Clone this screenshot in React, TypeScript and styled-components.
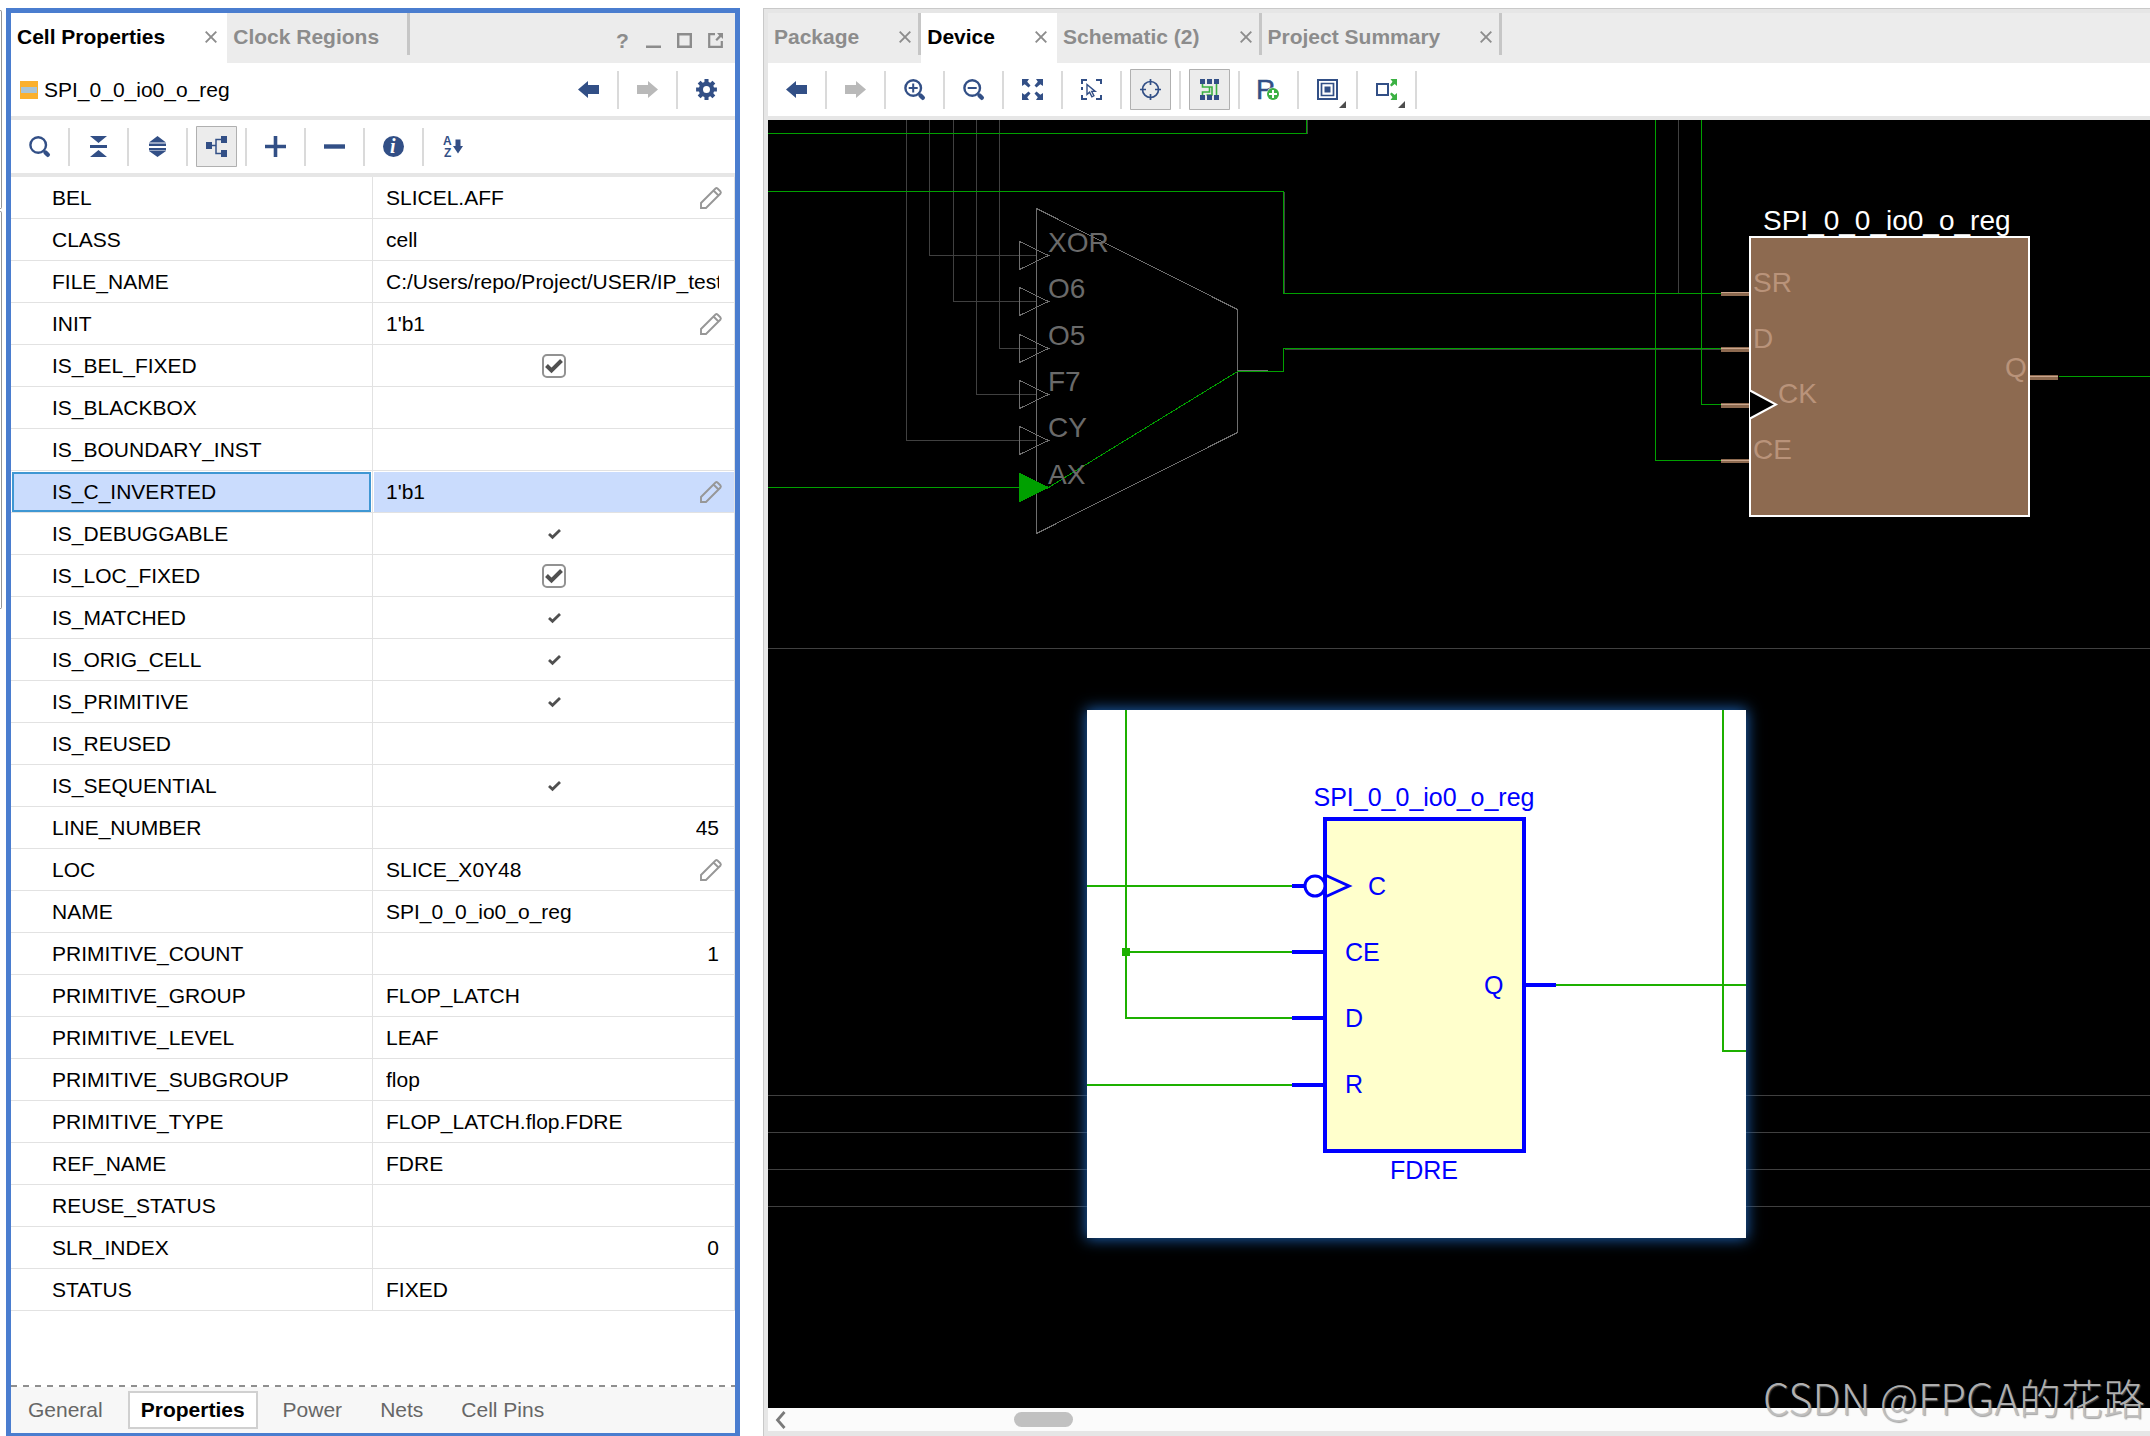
import React, { useState } from 'react';
import styled, { createGlobalStyle, css } from 'styled-components';

const navy = '#324f86';
const leaf = '#3bb143';
const rule = '#e6e6e6';
const sans = '"Liberation Sans", Arial, sans-serif';

const GlobalStyle = createGlobalStyle`
  *, *::before, *::after { box-sizing: border-box; }
  html, body { margin: 0; height: 100%; background: #fff; }
  body { font: 21px/24px ${sans}; color: #000; overflow: hidden; }
  button { font: inherit; color: inherit; background: none; border: 0; padding: 0; margin: 0; }
  svg { display: block; overflow: visible; }
`;

/* ---------- page frame ---------- */

const Workspace = styled.div`
  display: flex;
  height: 100vh;
  padding-top: 8px;
`;

const DockEdge = styled.div`
  display: flex;
  flex-direction: column;
  gap: 2px;
  flex: 0 0 2px;
  padding-top: 2px;
  margin-right: 4px;
`;

const DockEdgePart = styled.div<{ $h: number }>`
  height: ${p => p.$h}px;
  border: 1px solid #969696;
  border-left: 0;
  border-radius: 0 2px 2px 0;
`;

const PropertiesPanel = styled.section`
  display: flex;
  flex-direction: column;
  flex: 0 1 734px;
  min-width: 0;
  border: 5px solid #4a7dcf;
  border-bottom-width: 3px;
  margin-right: 23px;
`;

const EditorPanel = styled.section`
  display: flex;
  flex-direction: column;
  flex: 1 1 0;
  min-width: 0;
  border: solid #c9c9c9;
  border-width: 1px 0 0 1px;
  box-shadow: inset 4px 4px 0 ${rule};
  padding: 4px 0 0 4px;
`;

/* ---------- tabs ---------- */

const TabStrip = styled.div`
  display: flex;
  flex: 0 0 50px;
  background: #ececec;
`;

const TabBox = styled.div<{ $active?: boolean }>`
  display: flex;
  align-items: center;
  padding: 0 0 2px 6px;
  background: ${p => (p.$active ? '#fff' : 'transparent')};
  color: ${p => (p.$active ? '#000' : '#8c8c8c')};
`;

const TabLabel = styled.button`
  font-weight: 700;
  white-space: nowrap;
`;

const TabClose = styled.button`
  color: #8c8c8c;
  margin-left: 40px;
`;

const TabEnd = styled.span<{ $line?: boolean; $wide?: boolean }>`
  align-self: flex-start;
  width: ${p => (p.$wide ? 31 : 10)}px;
  height: 42px;
  border-right: ${p => (p.$line ? '3px solid #c6c6c6' : '0')};
`;

const WindowButtons = styled.div`
  display: flex;
  align-items: center;
  gap: 16px;
  margin-left: auto;
  padding: 5px 12px 0 0;
  color: #8c8c8c;
`;

const WindowButton = styled.button`
  width: 15px;
  height: 24px;
  display: grid;
  place-items: center;
  font-weight: 700;
`;

/* ---------- toolbars ---------- */

const Bar = styled.div`
  display: flex;
  align-items: center;
  flex: 0 0 57px;
  border-bottom: 4px solid ${rule};
`;

const CellTitle = styled.div`
  display: flex;
  align-items: center;
  gap: 6px;
  margin-right: auto;
  padding-left: 9px;
`;

const CellSwatch = styled.span`
  width: 18px;
  height: 18px;
  border: solid #fbb02d;
  border-width: 6px 1px;
  background: #a9c4d6;
`;

const ToolSlot = styled.div<{ $line?: boolean }>`
  display: flex;
  justify-content: center;
  align-items: center;
  width: ${p => (p.$line ? 59 : 57)}px;
  height: 38px;
  border-right: ${p => (p.$line ? '2px solid #dadada' : '0')};
`;

const ToolButton = styled.button<{ $pressed?: boolean }>`
  position: relative;
  flex: none;
  display: grid;
  place-items: center;
  width: 41px;
  height: 41px;
  color: ${navy};
  ${p => p.$pressed && css`
    background: #ececec;
    box-shadow: inset 0 0 0 1px #b0b0b0;
    border-radius: 1px;
  `}
  &:disabled { color: #b9b9b9; }
`;

const MenuCorner = styled.span`
  position: absolute;
  right: 2px;
  bottom: 2px;
  width: 7px;
  height: 7px;
  background: #4d4d4d;
  clip-path: polygon(100% 0, 100% 100%, 0 100%);
`;

/* ---------- property table ---------- */

const TableArea = styled.div`
  flex: 1 1 0;
  min-height: 0;
  overflow: hidden;
`;

const PropTable = styled.table`
  width: 100%;
  table-layout: fixed;
  border-collapse: separate;
  border-spacing: 0;
  th, td {
    width: 50%;
    height: 42px;
    padding: 1px 0 0 1px;
    font-weight: 400;
    text-align: left;
    border: solid #e2e2e2;
    border-width: 0 1px 1px 0;
  }
  th { padding-right: 1px; }
`;

const NameBox = styled.div<{ $on: boolean }>`
  height: 40px;
  display: flex;
  align-items: center;
  padding-left: 38px;
  border: 2px solid ${p => (p.$on ? '#3f97d3' : 'transparent')};
  background: ${p => (p.$on ? '#cadcfd' : 'transparent')};
`;

const ValueBox = styled.div<{ $on: boolean; $align: string }>`
  height: 40px;
  display: flex;
  align-items: center;
  justify-content: ${p => p.$align};
  padding: 0 ${p => (p.$align === 'space-between' || p.$align === 'center' ? 12 : 15)}px 0 12px;
  background: ${p => (p.$on ? '#cadcfd' : 'transparent')};
`;

const ValueText = styled.span`
  overflow: hidden;
  white-space: nowrap;
`;

const EditButton = styled.button`
  color: #979797;
`;

const CheckLabel = styled.label`
  display: grid;
  place-items: center;
  color: #505050;
  > * { grid-area: 1 / 1; }
  svg { pointer-events: none; }
`;

const CheckInput = styled.input`
  appearance: none;
  width: 24px;
  height: 24px;
  margin: 0;
  border: 2px solid #929292;
  border-radius: 5px;
  &:not(:checked) + svg { visibility: hidden; }
`;

/* ---------- bottom page tabs ---------- */

const PageTabs = styled.nav`
  display: flex;
  align-items: center;
  gap: 12px;
  flex: 0 0 48px;
  padding: 2px 4px 0;
  background:
    repeating-linear-gradient(90deg, #8f8f8f 0 6px, #fff 6px 12px) top / 100% 2px no-repeat,
    #f7f7f7;
`;

const PageTab = styled.button<{ $active?: boolean }>`
  height: 38px;
  padding: 0 13px;
  color: ${p => (p.$active ? '#000' : '#666')};
  font-weight: ${p => (p.$active ? 700 : 400)};
  background: ${p => (p.$active ? '#fff' : 'transparent')};
  box-shadow: ${p => (p.$active ? 'inset 0 0 0 2px #d0d0d0' : 'none')};
  white-space: nowrap;
`;

/* ---------- device view ---------- */

const DeviceCanvas = styled.div`
  position: relative;
  flex: 1 1 0;
  min-height: 0;
  overflow: hidden;
  background: #000;
`;

const DeviceDrawing = styled.svg`
  position: absolute;
  inset: 0;
  width: 100%;
  height: 100%;
  font-family: ${sans};
`;

const SchematicInset = styled.div`
  position: absolute;
  left: 319px;
  top: 590px;
  width: 659px;
  height: 528px;
  background: #fff;
  box-shadow: 0 0 14px 1px #1d62b4;
`;

const ScrollBar = styled.div`
  display: flex;
  align-items: center;
  flex: 0 0 28px;
  padding-left: 7px;
  border-bottom: 5px solid ${rule};
  background: #fbfbfb;
`;

const ScrollArrow = styled.button`
  color: #7a7a7a;
`;

const ScrollThumb = styled.div`
  width: 59px;
  height: 15px;
  margin-left: 228px;
  border-radius: 8px;
  background: #c1c1c1;
`;

const Watermark = styled.div`
  position: absolute;
  right: 5px;
  bottom: 9px;
  font: 300 42px/60px "Noto Sans CJK SC", sans-serif;
  color: rgba(190, 190, 190, 0.92);
  text-shadow: 1px 1px 1px rgba(110, 110, 110, 0.6);
  white-space: nowrap;
`;

/* ---------- icons ---------- */

const Icon = ({ size = 21, children }: { size?: number; children: React.ReactNode }) => (
  <svg width={size} height={size} viewBox={`0 0 ${size} ${size}`} fill="currentColor" aria-hidden="true">
    {children}
  </svg>
);

const Back = <Icon><path d="M0 10.5 10 2v4h11v9H10v4z" /></Icon>;
const Forward = <Icon><path d="M21 10.5 11 2v4H0v9h11v4z" /></Icon>;

const gearPath = (() => {
  const pts: string[] = [];
  for (let i = 0; i < 8; i++) {
    const a = (i * Math.PI) / 4;
    [[-0.27, 7.8], [-0.19, 10.6], [0.19, 10.6], [0.27, 7.8]].forEach(([d, r]) =>
      pts.push(`${(10.5 + r * Math.sin(a + d)).toFixed(2)} ${(10.5 - r * Math.cos(a + d)).toFixed(2)}`),
    );
  }
  return `M${pts.join('L')}ZM14 10.5a3.5 3.5 0 1 0-7 0a3.5 3.5 0 1 0 7 0Z`;
})();
const Gear = <Icon><path fillRule="evenodd" d={gearPath} /></Icon>;

const Lens = ({ mark }: { mark?: string }) => (
  <Icon>
    <circle cx="9.2" cy="9" r="7.8" fill="none" stroke="currentColor" strokeWidth="2.4" />
    <path d="M16.5 16.5 18.8 18.8" stroke="currentColor" strokeWidth="4.4" strokeLinecap="round" />
    {mark && <path d={mark} stroke="currentColor" strokeWidth="2" fill="none" />}
  </Icon>
);

const Collapse = <Icon><path d="M2 0h17l-8.500 7zM2 9h17v3H2zM10.500 14l8.500 7H2z" /></Icon>;
const Expand = <Icon><path d="M10.500 0l8.500 6.500H2zM2 7.500h17V10H2zM2 12h17v2.500H2zM2 15h17l-8.500 6z" /></Icon>;
const Tree = (
  <Icon>
    <path d="M0 6h6v7H0zM15 0h6v7h-6zM15 14h6v7h-6z" />
    <path d="M6 9.500h4M15 3.500h-5v14h5" fill="none" stroke="currentColor" strokeWidth="1.500" />
  </Icon>
);
const Plus = <Icon><path d="M8.700 0h3.600v8.700H21v3.600h-8.700V21H8.700v-8.700H0V8.700h8.700z" /></Icon>;
const Minus = <Icon><path d="M0 8.300h21v4.400H0z" /></Icon>;
const Info = (
  <Icon>
    <circle cx="10.500" cy="10.500" r="10.500" />
    <text x="7" y="17" fontFamily="Liberation Serif, serif" fontSize="20" fontWeight="700" fontStyle="italic" fill="#fff">i</text>
  </Icon>
);
const SortAZ = (
  <Icon>
    <g fontFamily="Liberation Sans, sans-serif" fontSize="12" fontWeight="700">
      <text x="1" y="9">A</text>
      <text x="2" y="21">Z</text>
    </g>
    <path d="M13.500 3.500h5V10H21l-5 7.500L11 10h2.500z" />
  </Icon>
);
const Fit = (
  <Icon>
    {[0, 90, 180, 270].map(a => (
      <g key={a} transform={`rotate(${a} 10.5 10.5)`}>
        <path d="M0 0h7L5.200 2.700 8.500 6.500l-2 2L2.700 5.200 0 7z" />
      </g>
    ))}
  </Icon>
);
const SelectArea = (
  <Icon>
    <path d="M0 5V0h6v2H2v3zM15 0h6v5h-2V2h-4zM0 16v5h6v-2H2v-3zM21 16v5h-6v-2h4v-3zM0 8h2v3H0z" />
    <path d="M6 5.500v10l2.600-2.300 2.300 4.600 2-1-2.200-4.400h3.500z" fill="#fff" stroke="currentColor" strokeWidth="1.400" />
  </Icon>
);
const Crosshair = (
  <Icon>
    <circle cx="10.500" cy="10.500" r="8" fill="none" stroke="currentColor" strokeWidth="1.700" />
    <path d="M10.500 0v6M10.500 15v6M0 10.500h6M15 10.500h6" stroke="currentColor" strokeWidth="1.700" />
  </Icon>
);
const Routing = (
  <Icon>
    <path d="M3.500 4v4h7v5h-7v4M10.500 8h2.500v8H7.500M17.500 4v13" fill="none" stroke={leaf} strokeWidth="1.600" />
    <path d="M1 0h5v5H1zM8 0h5v5H8zM15 0h5v5h-5zM1 16h5v5H1zM8 16h5v5H8zM15 16h5v5h-5z" />
  </Icon>
);
const AddPblock = (
  <Icon>
    <text x="-2" y="20" fontFamily="Liberation Sans, sans-serif" fontSize="28" stroke="currentColor" strokeWidth="0.500">P</text>
    <circle cx="15" cy="15" r="6.500" fill="#fff" />
    <circle cx="15" cy="15" r="6" fill={leaf} />
    <path d="M15 11v8M11 15h8" stroke="#fff" strokeWidth="2" />
  </Icon>
);
const Layers = (
  <Icon>
    <path d="M1 1h19v19H1z" fill="none" stroke="currentColor" strokeWidth="2" />
    <path d="M4.500 4.500h12v12h-12z" fill="none" stroke="currentColor" strokeWidth="1.700" />
    <path d="M7.500 7.500h6v6h-6z" />
  </Icon>
);
const Spread = (
  <Icon>
    <path d="M1 5h11v11H1z" fill="none" stroke="currentColor" strokeWidth="2" />
    <path d="M21 0v7l-2.300-2-3.200 2.500-1.500-1.500L16.500 2.700 14.500 0zM21 21v-7l-2.300 2-3.200-2.500-1.500 1.500 2.500 3.300-2 2.700z" fill={leaf} />
  </Icon>
);
const Cross = (
  <Icon size={12}>
    <path d="M.700.700 11.300 11.300M11.300.700.700 11.300" stroke="currentColor" strokeWidth="1.900" />
  </Icon>
);
const Minimize = <Icon size={15}><path d="M0 12.500h15V15H0z" /></Icon>;
const Maximize = <Icon size={15}><path d="M1.200 1.200h12.600v12.600H1.200z" fill="none" stroke="currentColor" strokeWidth="2.400" /></Icon>;
const PopOut = (
  <Icon size={15}>
    <path d="M7 1.200H1.200v12.600h12.600V8" fill="none" stroke="currentColor" strokeWidth="2.200" />
    <path d="M9 0h6v6l-2-2-4 4-1.600-1.600 3.800-4z" />
  </Icon>
);
const Pencil = (
  <Icon size={22}>
    <path d="M1 21v-5L15.500 1.500q1-.800 2 0l3 3q.800 1 0 2L6 21zM13.500 3.500l5 5" fill="none" stroke="currentColor" strokeWidth="1.900" />
  </Icon>
);
const BoldCheck = (
  <svg width="18" height="14" viewBox="0 0 18 14" aria-hidden="true">
    <path d="M1.500 6.500 6.500 11.500 16.500 1.500" fill="none" stroke="currentColor" strokeWidth="4" />
  </svg>
);

/* ---------- data ---------- */

type Kind = 'text' | 'edit' | 'box' | 'tick' | 'number';
const properties: [string, string, Kind][] = [
  ['BEL', 'SLICEL.AFF', 'edit'],
  ['CLASS', 'cell', 'text'],
  ['FILE_NAME', 'C:/Users/repo/Project/USER/IP_test', 'text'],
  ['INIT', "1'b1", 'edit'],
  ['IS_BEL_FIXED', '', 'box'],
  ['IS_BLACKBOX', '', 'text'],
  ['IS_BOUNDARY_INST', '', 'text'],
  ['IS_C_INVERTED', "1'b1", 'edit'],
  ['IS_DEBUGGABLE', '', 'tick'],
  ['IS_LOC_FIXED', '', 'box'],
  ['IS_MATCHED', '', 'tick'],
  ['IS_ORIG_CELL', '', 'tick'],
  ['IS_PRIMITIVE', '', 'tick'],
  ['IS_REUSED', '', 'text'],
  ['IS_SEQUENTIAL', '', 'tick'],
  ['LINE_NUMBER', '45', 'number'],
  ['LOC', 'SLICE_X0Y48', 'edit'],
  ['NAME', 'SPI_0_0_io0_o_reg', 'text'],
  ['PRIMITIVE_COUNT', '1', 'number'],
  ['PRIMITIVE_GROUP', 'FLOP_LATCH', 'text'],
  ['PRIMITIVE_LEVEL', 'LEAF', 'text'],
  ['PRIMITIVE_SUBGROUP', 'flop', 'text'],
  ['PRIMITIVE_TYPE', 'FLOP_LATCH.flop.FDRE', 'text'],
  ['REF_NAME', 'FDRE', 'text'],
  ['REUSE_STATUS', '', 'text'],
  ['SLR_INDEX', '0', 'number'],
  ['STATUS', 'FIXED', 'text'],
];

const alignOf: Record<Kind, string> = {
  text: 'flex-start',
  edit: 'space-between',
  box: 'center',
  tick: 'center',
  number: 'flex-end',
};

/* ---------- parts ---------- */

interface TabProps { label: string; active?: boolean; closable?: boolean; line?: boolean }

const Tab = ({ label, active, closable = true, line }: TabProps) => (
  <TabBox $active={active}>
    <TabLabel type="button">{label}</TabLabel>
    {closable && <TabClose type="button" aria-label={`Close ${label}`}>{Cross}</TabClose>}
    <TabEnd $line={line} $wide={!closable} />
  </TabBox>
);

interface ToolProps { label: string; icon: React.ReactNode; pressed?: boolean; disabled?: boolean; menu?: boolean; last?: boolean }

const Tool = ({ label, icon, pressed, disabled, menu, last }: ToolProps) => (
  <ToolSlot $line={!last}>
    <ToolButton type="button" aria-label={label} $pressed={pressed} disabled={disabled}>
      {icon}
      {menu && <MenuCorner />}
    </ToolButton>
  </ToolSlot>
);

const PropertyValue = ({ name, value, kind }: { name: string; value: string; kind: Kind }) => {
  if (kind === 'box') {
    return (
      <CheckLabel>
        <CheckInput type="checkbox" defaultChecked aria-label={name} />
        {BoldCheck}
      </CheckLabel>
    );
  }
  if (kind === 'tick') {
    return (
      <svg width="13" height="10" viewBox="0 0 13 10" role="img" aria-label="true">
        <path d="M1 5 4.500 8.300 12 1" fill="none" stroke="#505050" strokeWidth="2.800" />
      </svg>
    );
  }
  return (
    <>
      <ValueText>{value}</ValueText>
      {kind === 'edit' && <EditButton type="button" aria-label={`Edit ${name}`}>{Pencil}</EditButton>}
    </>
  );
};

const muxInputs = [
  { name: 'XOR', x: 929, y: 255 },
  { name: 'O6', x: 953, y: 301 },
  { name: 'O5', x: 999, y: 348 },
  { name: 'F7', x: 976, y: 394 },
  { name: 'CY', x: 906, y: 440 },
];

const DeviceLayer = () => (
  <DeviceDrawing aria-label="Device view">
    <g transform="translate(-767.5 -119.5)" fill="none" shapeRendering="crispEdges">
      <g stroke="#404040">
        <path d="M767 648H4000M767 1095H4000M767 1132H4000M767 1169H4000M767 1206H4000M1678 119V293M1284 349H1721M1307 119V133M1284 191V293" />
        {muxInputs.map(m => <path key={m.name} d={`M${m.x} 119V${m.y}H1036`} />)}
      </g>
      <g stroke="#6e6e6e">
        <path d="M1036 208 1237 309V432L1036 533ZM1237 370H1267" />
        {muxInputs.map(m => <path key={m.name} d={`M1019 ${m.y - 14}V${m.y + 14}L1048 ${m.y}Z`} />)}
      </g>
      <g stroke="#00a000">
        <path d="M767 133H1306V119M767 191H1283V293H1721M767 487H1019M1048 487 1237 371H1283V348H1721M1655 119V460H1721M1701 119V404H1721M2058 376H4000" />
        <path d="M1019 473V501L1048 487Z" fill="#00a000" />
      </g>
    </g>
    <g transform="translate(-768 -120)" fontSize="28">
      <g fill="#6a6a6a">
        {muxInputs.map(m => <text key={m.name} x="1048" y={m.y - 3}>{m.name}</text>)}
        <text x="1048" y="484">AX</text>
      </g>
      <path d="M1721 292h28v4h-28zM1721 347h28v5h-28zM1721 403h28v5h-28zM1721 459h28v4h-28zM2030 375h28v5h-28z" fill="#8d6a50" />
      <path d="M1721 292h28v1h-28zM1721 348h28v1h-28zM1721 404h28v1h-28zM1721 460h28v1h-28zM2030 376h28v1h-28z" fill="#c9a58c" />
      <rect x="1750" y="237" width="279" height="279" fill="#8d6a50" stroke="#fff" strokeWidth="2" />
      <path d="M1750 390.500 1776 404.500 1750 418.500" fill="#000" stroke="#fff" strokeWidth="2" />
      <g fill="#b9937a">
        <text x="1753" y="292">SR</text>
        <text x="1753" y="348">D</text>
        <text x="1778" y="403">CK</text>
        <text x="1753" y="459">CE</text>
        <text x="2005" y="377">Q</text>
      </g>
      <text x="1763" y="230" fill="#fff">SPI_0_0_io0_o_reg</text>
    </g>
  </DeviceDrawing>
);

const SchematicLayer = () => (
  <SchematicInset>
    <svg width="659" height="528" viewBox="1087 710 659 528" fontFamily={sans} fontSize="25" aria-label="Schematic symbol">
      <path
        d="M1087 886H1292M1126 710V1018H1292M1126 952H1292M1087 1085H1292M1556 985H1746M1723 710V1051H1746"
        fill="none" stroke="#1db000" strokeWidth="2"
      />
      <rect x="1122" y="948" width="8" height="8" fill="#1db000" />
      <g stroke="#00f" strokeWidth="4" fill="none">
        <rect x="1325" y="819" width="199" height="332" fill="#ffffcc" />
        <path d="M1292 886h12M1292 952h32M1292 1018h32M1292 1085h32M1524 985h32" />
        <path d="M1325 875 1349 886 1325 897" strokeWidth="3" />
        <circle cx="1315" cy="886" r="10" fill="#fff" strokeWidth="3" />
      </g>
      <g fill="#00f">
        <text x="1424" y="806" textAnchor="middle">SPI_0_0_io0_o_reg</text>
        <text x="1368" y="895">C</text>
        <text x="1345" y="961">CE</text>
        <text x="1345" y="1027">D</text>
        <text x="1345" y="1093">R</text>
        <text x="1484" y="994">Q</text>
        <text x="1424" y="1179" textAnchor="middle">FDRE</text>
      </g>
    </svg>
  </SchematicInset>
);

const pages = ['General', 'Properties', 'Power', 'Nets', 'Cell Pins'];

export default function App() {
  const [selected, setSelected] = useState('IS_C_INVERTED');
  const [page, setPage] = useState('Properties');

  return (
    <>
      <GlobalStyle />
      <Workspace>
        <DockEdge>
          <DockEdgePart $h={199} />
          <DockEdgePart $h={398} />
        </DockEdge>

        <PropertiesPanel>
          <TabStrip>
            <Tab label="Cell Properties" active />
            <Tab label="Clock Regions" closable={false} line />
            <WindowButtons>
              <WindowButton type="button">?</WindowButton>
              <WindowButton type="button" aria-label="Minimize">{Minimize}</WindowButton>
              <WindowButton type="button" aria-label="Maximize">{Maximize}</WindowButton>
              <WindowButton type="button" aria-label="Float">{PopOut}</WindowButton>
            </WindowButtons>
          </TabStrip>
          <Bar>
            <CellTitle><CellSwatch />SPI_0_0_io0_o_reg</CellTitle>
            <Tool label="Previous" icon={Back} />
            <Tool label="Next" icon={Forward} disabled />
            <Tool label="Settings" icon={Gear} last />
          </Bar>
          <Bar>
            <Tool label="Search" icon={<Lens />} />
            <Tool label="Collapse all" icon={Collapse} />
            <Tool label="Expand all" icon={Expand} />
            <Tool label="Group by category" icon={Tree} pressed />
            <Tool label="Add" icon={Plus} />
            <Tool label="Remove" icon={Minus} />
            <Tool label="Information" icon={Info} />
            <Tool label="Sort" icon={SortAZ} last />
          </Bar>
          <TableArea>
            <PropTable>
              <tbody>
                {properties.map(([name, value, kind]) => (
                  <tr key={name} onClick={() => setSelected(name)}>
                    <th scope="row"><NameBox $on={name === selected}>{name}</NameBox></th>
                    <td>
                      <ValueBox $on={name === selected} $align={alignOf[kind]}>
                        <PropertyValue name={name} value={value} kind={kind} />
                      </ValueBox>
                    </td>
                  </tr>
                ))}
              </tbody>
            </PropTable>
          </TableArea>
          <PageTabs>
            {pages.map(p => (
              <PageTab key={p} type="button" $active={p === page} onClick={() => setPage(p)}>{p}</PageTab>
            ))}
          </PageTabs>
        </PropertiesPanel>

        <EditorPanel>
          <TabStrip>
            <Tab label="Package" line />
            <Tab label="Device" active />
            <Tab label="Schematic (2)" line />
            <Tab label="Project Summary" line />
          </TabStrip>
          <Bar>
            <Tool label="Previous" icon={Back} />
            <Tool label="Next" icon={Forward} disabled />
            <Tool label="Zoom in" icon={<Lens mark="M9.200 4.500v9M4.700 9h9" />} />
            <Tool label="Zoom out" icon={<Lens mark="M4.700 9h9" />} />
            <Tool label="Zoom fit" icon={Fit} />
            <Tool label="Select area" icon={SelectArea} />
            <Tool label="Auto-fit selection" icon={Crosshair} pressed />
            <Tool label="Routing resources" icon={Routing} pressed />
            <Tool label="Draw Pblock" icon={AddPblock} />
            <Tool label="Cell drag mode" icon={Layers} menu />
            <Tool label="Show connections" icon={Spread} menu />
          </Bar>
          <DeviceCanvas>
            <DeviceLayer />
            <SchematicLayer />
          </DeviceCanvas>
          <ScrollBar>
            <ScrollArrow type="button" aria-label="Scroll left">
              <svg width="11" height="18" viewBox="0 0 11 18" aria-hidden="true">
                <path d="M9.500 1 2.500 9l7 8" fill="none" stroke="currentColor" strokeWidth="2.800" />
              </svg>
            </ScrollArrow>
            <ScrollThumb />
          </ScrollBar>
        </EditorPanel>
        <Watermark>CSDN @FPGA的花路</Watermark>
      </Workspace>
    </>
  );
}
